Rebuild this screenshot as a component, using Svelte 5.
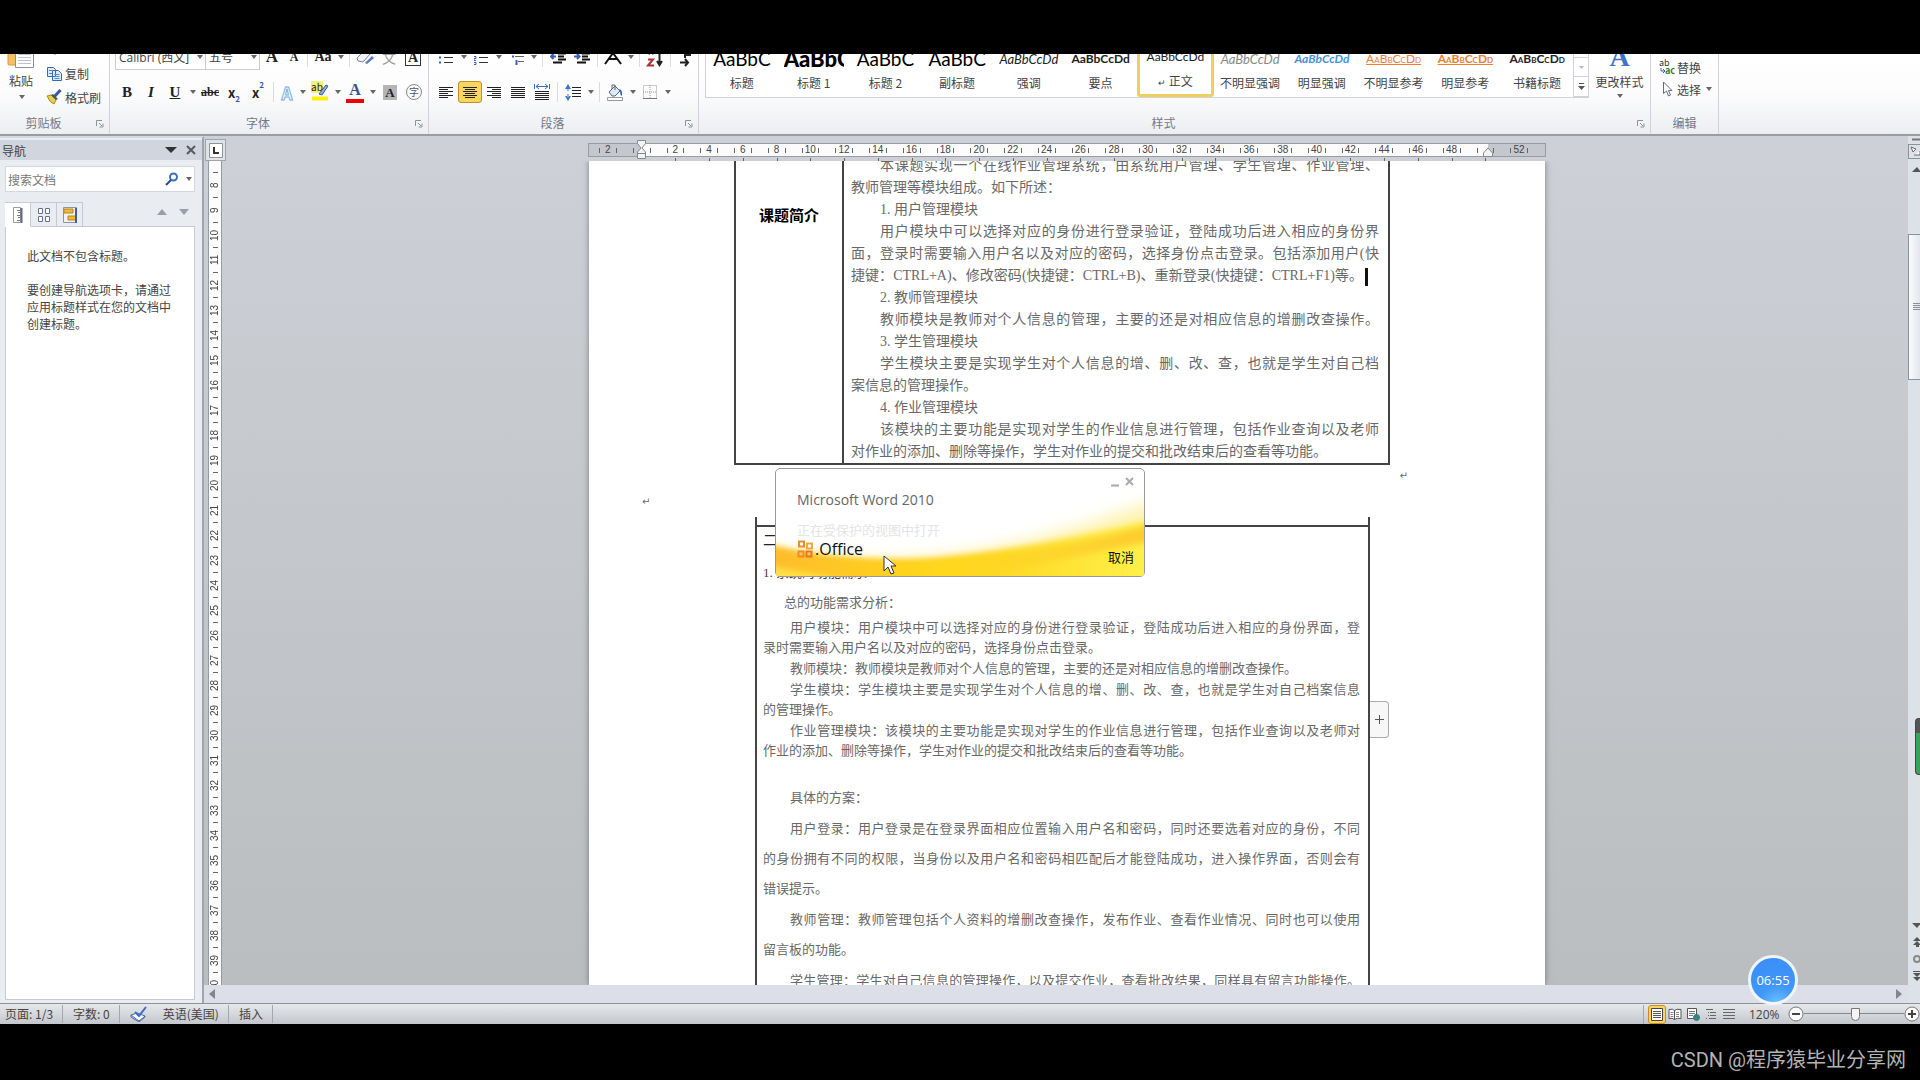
<script>
  const styles = [
    { sample: 'AaBbC', name: '标题', kind: 'big' },
    { sample: 'AaBbC', name: '标题 1', kind: 'huge' },
    { sample: 'AaBbC', name: '标题 2', kind: 'big' },
    { sample: 'AaBbC', name: '副标题', kind: 'big' },
    { sample: 'AaBbCcDd', name: '强调', kind: 'italic' },
    { sample: 'AaBbCcDd', name: '要点', kind: 'bold' },
    { sample: 'AaBbCcDd', name: '正文', kind: 'active' },
    { sample: 'AaBbCcDd', name: '不明显强调', kind: 'subtle' },
    { sample: 'AaBbCcDd', name: '明显强调', kind: 'intense' },
    { sample: 'AaBbCcDd', name: '不明显参考', kind: 'ref' },
    { sample: 'AaBbCcDd', name: '明显参考', kind: 'ref strong' },
    { sample: 'AaBbCcDd', name: '书籍标题', kind: 'book' }
  ];

  // horizontal ruler labels, '' where an indent marker sits
  const hMarks = ['2', ''];
  for (let i = 2; i <= 48; i += 2) hMarks.push(String(i));
  hMarks.push('', '52');

  const vMarks = [];
  for (let i = 8; i <= 40; i++) vMarks.push(i);

  // i: first line indent, f: line runs to the right margin
  const intro = [
    { t: '本课题实现一个在线作业管理系统，由系统用户管理、学生管理、作业管理、', i: true, f: true },
    { t: '教师管理等模块组成。如下所述：' },
    { t: '1. 用户管理模块', i: true },
    { t: '用户模块中可以选择对应的身份进行登录验证，登陆成功后进入相应的身份界', i: true, f: true },
    { t: '面，登录时需要输入用户名以及对应的密码，选择身份点击登录。包括添加用户(快', f: true },
    { t: '捷键：CTRL+A)、修改密码(快捷键：CTRL+B)、重新登录(快捷键：CTRL+F1)等。', f: true, caret: true },
    { t: '2. 教师管理模块', i: true },
    { t: '教师模块是教师对个人信息的管理，主要的还是对相应信息的增删改查操作。', i: true, f: true },
    { t: '3. 学生管理模块', i: true },
    { t: '学生模块主要是实现学生对个人信息的增、删、改、查，也就是学生对自己档', i: true, f: true },
    { t: '案信息的管理操作。' },
    { t: '4. 作业管理模块', i: true },
    { t: '该模块的主要功能是实现对学生的作业信息进行管理，包括作业查询以及老师', i: true, f: true },
    { t: '对作业的添加、删除等操作，学生对作业的提交和批改结束后的查看等功能。' }
  ];

  const needs = [
    ['用户模块：用户模块中可以选择对应的身份进行登录验证，登陆成功后进入相应的身份界面，登', '录时需要输入用户名以及对应的密码，选择身份点击登录。'],
    ['教师模块：教师模块是教师对个人信息的管理，主要的还是对相应信息的增删改查操作。'],
    ['学生模块：学生模块主要是实现学生对个人信息的增、删、改、查，也就是学生对自己档案信息', '的管理操作。'],
    ['作业管理模块：该模块的主要功能是实现对学生的作业信息进行管理，包括作业查询以及老师对', '作业的添加、删除等操作，学生对作业的提交和批改结束后的查看等功能。']
  ];

  const plans = [
    ['用户登录：用户登录是在登录界面相应位置输入用户名和密码，同时还要选着对应的身份，不同', '的身份拥有不同的权限，当身份以及用户名和密码相匹配后才能登陆成功，进入操作界面，否则会有', '错误提示。'],
    ['教师管理：教师管理包括个人资料的增删改查操作，发布作业、查看作业情况、同时也可以使用', '留言板的功能。'],
    ['学生管理：学生对自己信息的管理操作，以及提交作业，查看批改结果，同样具有留言功能操作。', '']
  ];

  let search = $state('');
  let zoom = $state(52);
</script>

{#snippet arrow()}
  <svg class="arrow" width="11" height="8" viewBox="0 0 11 8"><path d="M3 2h6L6 6z" fill="#666" /></svg>
{/snippet}

{#snippet launcher()}
  <svg class="launcher" width="8" height="8" viewBox="0 0 8 8"><path d="M.5 6V.5H6M3 3l3 3M7 3.5V7H3.5" fill="none" stroke="#8d929a" /></svg>
{/snippet}

{#snippet lines(a, b, c, d)}
  <svg width="14" height="13" viewBox="0 0 14 13">
    {#each [0, 1, 2, 3, 4, 5] as n}
      <path d={n % 2 ? `M${c} ${n * 2 + 1}.5H${d}` : `M${a} ${n * 2 + 1}.5H${b}`} stroke="#222" />
    {/each}
  </svg>
{/snippet}

{#snippet para(rows)}
  <div class="para">
    {#each rows as row, n}
      <div class="line" class:indent={n === 0} class:full={n < rows.length - 1}>{row}</div>
    {/each}
  </div>
{/snippet}

<div class="screen">
  <div class="band top"></div>

  <div class="word">
    <header class="ribbon">
      <section class="group clipboard">
        <div class="body">
          <button class="paste">
            <svg width="28" height="32" viewBox="0 0 28 32">
              <rect x="1" y="2" width="16" height="26" rx="1" fill="#f5bf62" stroke="#d99a3c" />
              <path d="M8.500 12.500h18v18h-18z" fill="#fff" stroke="#8a8f99" />
              <path d="M11 17.500h13M11 20.500h13M11 23.500h13M11 26.500h13" stroke="#b9c3d3" />
            </svg>
            <span>粘贴</span>
            {@render arrow()}
          </button>
          <div class="stack">
            <button aria-label="剪切"><svg width="16" height="16" viewBox="0 0 16 16"><path d="M4 1l4 8M11 1L7 9" stroke="#555" /><circle cx="5" cy="10" r="2" fill="none" stroke="#224" /><circle cx="9" cy="11" r="2" fill="none" stroke="#224" /></svg></button>
            <button><svg width="16" height="16" viewBox="0 0 16 16"><path d="M1.500 2.500h6l2 2v7h-8zM6.500 5.500h6l3 3v7h-9z" fill="#dbe9fb" stroke="#3b66b5" /><path d="M3 5.500h3M3 8.500h3M8.500 9.500h5M8.500 11.500h5M8.500 13.500h5" stroke="#5b87cf" /></svg>复制</button>
            <button><svg width="16" height="16" viewBox="0 0 16 16"><path d="M14.500 1L8 8" stroke="#3b56a0" stroke-width="3" /><path d="M1 7l4-1 5 5-2 4q-4-1-7-8z" fill="#e9cf4e" stroke="#a58a23" /><path d="M5 6l5 5 2-1-5-5z" fill="#4f5560" /></svg>格式刷</button>
          </div>
        </div>
        <footer>剪贴板{@render launcher()}</footer>
      </section>

      <section class="group font">
        <div class="body rows">
          <div class="row first">
            <label class="combo face"><select aria-label="字体"><option>Calibri (西文]</option></select>{@render arrow()}</label>
            <label class="combo size"><select aria-label="字号"><option>五号</option></select>{@render arrow()}</label>
            <button class="serif up">A</button>
            <button class="serif down">A</button>
            <i class="sep"></i>
            <button class="serif case">Aa</button>{@render arrow()}
            <i class="sep"></i>
            <button aria-label="清除格式"><svg width="20" height="18" viewBox="0 0 20 18"><path d="M2 10l7-7 6 3-7 8-5-1z" fill="#f2f2f6" stroke="#7b84a5" /><path d="M10 15l7-7 2 2-7 6z" fill="#5a77c0" /></svg></button>
            <button class="wen">文</button>
            <button><span class="boxed">A</span></button>
          </div>
          <div class="row">
            <button class="serif"><b>B</b></button>
            <button class="serif"><em>I</em></button>
            <button class="serif"><u>U</u></button>{@render arrow()}
            <button class="serif small"><s>abc</s></button>
            <button class="script">x<sub>2</sub></button>
            <button class="script">x<sup>2</sup></button>
            <i class="sep"></i>
            <button class="glow">A</button>{@render arrow()}
            <button class="mark"><span>ab</span><svg width="20" height="18" viewBox="0 0 20 18"><path d="M9 11l7-9 2 1-6 9z" fill="#8fb1e6" stroke="#35588f" /><path d="M2 15.500h16" stroke="#ffee00" stroke-width="4" /></svg></button>{@render arrow()}
            <button class="ink">A</button>{@render arrow()}
            <button><span class="shade">A</span></button>
            <button><span class="ring">字</span></button>
          </div>
        </div>
        <footer>字体{@render launcher()}</footer>
      </section>

      <section class="group paragraph">
        <div class="body rows">
          <div class="row first">
            <button aria-label="项目符号"><svg width="14" height="16" viewBox="0 0 14 16"><path d="M5 3.500h9M5 8.500h9M5 13.500h9" stroke="#333" /><path d="M0 3.500h2M0 8.500h2M0 13.500h2" stroke="#3b5fb8" stroke-width="2" /></svg></button>{@render arrow()}
            <button aria-label="编号"><svg width="14" height="16" viewBox="0 0 14 16"><path d="M5 3.500h9M5 8.500h9M5 13.500h9" stroke="#333" /><path d="M1.500 1v4M0 7.500h2v2H0v2h2M0 15.500h2v-2H0" fill="none" stroke="#3b5fb8" /></svg></button>{@render arrow()}
            <button aria-label="多级列表"><svg width="18" height="18" viewBox="0 0 18 18"><path d="M4 3.500h10M8 8.500h9M11 13.500h6" stroke="#666" /><path d="M1.500 1v4M5 8.500h2M9.500 12v5" stroke="#3b5fb8" stroke-width="2" /></svg></button>{@render arrow()}
            <i class="sep"></i>
            <button aria-label="减少缩进量"><svg width="16" height="16" viewBox="0 0 16 16"><path d="M0 1.500h16M8 4.500h8M8 7.500h6M8 10.500h8M3 13.500h9" stroke="#111" stroke-width="2" /><path d="M6 7.500H1M3.500 5L1 7.500 3.500 10" fill="none" stroke="#3b5fb8" stroke-width="2" /></svg></button>
            <button aria-label="增加缩进量"><svg width="16" height="16" viewBox="0 0 16 16"><path d="M0 1.500h16M8 4.500h8M8 7.500h6M8 10.500h8M3 13.500h9" stroke="#111" stroke-width="2" /><path d="M0 7.500h5M3 5l2.500 2.500L3 10" fill="none" stroke="#3b5fb8" stroke-width="2" /></svg></button>
            <i class="sep"></i>
            <button aria-label="中文版式"><svg width="18" height="20" viewBox="0 0 18 20"><path d="M1 17l8-11 8 11M5 12h8" fill="none" stroke="#111" stroke-width="2" /></svg></button>{@render arrow()}
            <i class="sep"></i>
            <button aria-label="排序"><svg width="18" height="22" viewBox="0 0 18 22"><path d="M3 9l2-6 2 6" fill="none" stroke="#3b5fb8" /><path d="M2 13.500h5l-5 6h6" fill="none" stroke="#a33" stroke-width="2" /><path d="M13.500 2v16M11 15l2.500 4 2.500-4" fill="none" stroke="#222" stroke-width="2" /></svg></button>
            <i class="sep"></i>
            <button aria-label="编辑标记"><svg width="14" height="20" viewBox="0 0 14 20"><path d="M6 3v8M6 4h5v4H7" fill="none" stroke="#222" stroke-width="2" /><path d="M1 15.500h8M6 12l3 3.500L6 19" fill="none" stroke="#222" stroke-width="2" /></svg></button>
          </div>
          <div class="row">
            <button aria-label="左对齐">{@render lines(0, 14, 0, 9)}</button>
            <button class="on" aria-label="居中">{@render lines(0, 14, 2, 12)}</button>
            <button aria-label="右对齐">{@render lines(0, 14, 5, 14)}</button>
            <button aria-label="两端对齐">{@render lines(0, 14, 0, 14)}</button>
            <button aria-label="分散对齐"><svg width="16" height="18" viewBox="0 0 16 18"><path d="M.5 1v5M15.500 1v5M2 3.500h12M5 1L2 3.500 5 6M11 1l3 2.500L11 6" fill="none" stroke="#3b66c5" /><path d="M1 8.500h14M1 10.500h14M1 12.500h14M1 14.500h14M1 16.500h14" stroke="#222" /></svg></button>
            <i class="sep"></i>
            <button aria-label="行距"><svg width="16" height="17" viewBox="0 0 16 17"><path d="M3 0l3 5H0zM3 17l3-5H0zM2.500 4h1v3h-1zM2.500 10h1v3h-1z" fill="#3b73c9" /><path d="M7 3.500h9M7 6.500h9M7 9.500h9M7 12.500h9" stroke="#222" /></svg></button>{@render arrow()}
            <i class="sep"></i>
            <button aria-label="底纹"><svg width="18" height="17" viewBox="0 0 18 17"><path d="M3 8l6-6 5 5-5 5H6z" fill="#dfe8f5" stroke="#55647c" /><path d="M6 5V1h3v5" fill="none" stroke="#55647c" /><path d="M13 5q4 1 3 7-2-1-2-4z" fill="#3568c0" /><path d="M1.500 13.500h15v3h-15z" fill="#fff" stroke="#999" /></svg></button>{@render arrow()}
            <button aria-label="框线"><svg width="14" height="14" viewBox="0 0 14 14"><path d="M.5.5h13v13H.5zM7 0v14M0 7h14" fill="none" stroke="#999" stroke-dasharray="1 1" /><path d="M0 13.500h14" stroke="#777" /></svg></button>{@render arrow()}
          </div>
        </div>
        <footer>段落{@render launcher()}</footer>
      </section>

      <section class="group styles">
        <div class="body">
          <div class="gallery">
            {#each styles as s}
              <button class="style {s.kind}">
                <span class="sample">{s.sample}</span>
                <span class="name">{#if s.kind === 'active'}<small>↵</small>{/if} {s.name}</span>
              </button>
            {/each}
            <div class="pager">
              <button aria-label="上一行"></button>
              <button aria-label="下一行"><svg width="7" height="5" viewBox="0 0 7 5"><path d="M1 1h5L3.500 4z" fill="#b5b9c0" /></svg></button>
              <button aria-label="其他"><svg width="7" height="8" viewBox="0 0 7 8"><path d="M1 .5h5" stroke="#555" /><path d="M0 3h7L3.500 7z" fill="#555" /></svg></button>
            </div>
          </div>
          <button class="change">
            <span class="bigA">A</span>
            <span>更改样式</span>
            {@render arrow()}
          </button>
        </div>
        <footer>样式{@render launcher()}</footer>
      </section>

      <section class="group edit">
        <div class="body">
          <div class="stack">
            <button><svg width="16" height="16" viewBox="0 0 16 16"><text x="0" y="7" font-size="9" fill="#333">ab</text><path d="M2 9v3h3M4 10l2 2-2 2" fill="none" stroke="#3b5fb8" /><text x="6" y="15" font-size="9" font-weight="bold" fill="#2e7d32">ac</text></svg>替换</button>
            <button><svg width="16" height="16" viewBox="0 0 16 16"><path d="M4.500 1v11.500l3-2.500 2 5 2-1-2-4.500h3.500z" fill="#fff" stroke="#5a6d92" /></svg>选择{@render arrow()}</button>
          </div>
        </div>
        <footer>编辑</footer>
      </section>
    </header>

    <main class="work">
      <aside class="nav">
        <h2>导航
          <span><svg width="12" height="8" viewBox="0 0 12 8"><path d="M0 1h12L6 7z" fill="#333" /></svg><svg width="10" height="10" viewBox="0 0 10 10"><path d="M1 1l8 8M9 1L1 9" stroke="#555b66" stroke-width="2" /></svg></span>
        </h2>
        <label class="search">
          <input type="text" placeholder="搜索文档" bind:value={search} />
          <svg width="14" height="14" viewBox="0 0 14 14"><circle cx="8.500" cy="5" r="3.500" fill="none" stroke="#3b70b5" stroke-width="2" /><path d="M6 8l-5 5" stroke="#27508a" stroke-width="2" /></svg>
          {@render arrow()}
        </label>
        <div class="tabs">
          <button class="tab current" aria-label="标题"><svg width="10" height="16" viewBox="0 0 10 16"><path d="M.5.5h7v15h-7z" fill="#fff" stroke="#99a" /><path d="M8.500 1v15" stroke="#667" stroke-width="2" /><path d="M4 3.500h3M5 5.500h2M4 8.500h3M5 10.500h2M4 13.500h3" stroke="#778" /></svg></button>
          <button class="tab" aria-label="页面"><svg width="14" height="16" viewBox="0 0 14 16"><path d="M1.500 1.500h4v5h-4zM8.500 1.500h4v5h-4zM1.500 9.500h4v5h-4zM8.500 9.500h4v5h-4z" fill="#fff" stroke="#66708c" /></svg></button>
          <button class="tab" aria-label="结果"><svg width="14" height="16" viewBox="0 0 14 16"><path d="M.5.5h13v15H.5z" fill="#eef2fa" stroke="#8a93ab" /><path d="M1 2h9v4H1zM5 9h8v4H5z" fill="#efb93a" stroke="#b98617" /><path d="M13 1v15" stroke="#445c99" stroke-width="2" /></svg></button>
          <span class="steps"><svg width="10" height="7" viewBox="0 0 10 7"><path d="M5 0l5 6H0z" fill="#9a9fa6" /></svg><svg width="10" height="7" viewBox="0 0 10 7"><path d="M0 0h10L5 6z" fill="#9a9fa6" /></svg></span>
        </div>
        <div class="panel">
          <p>此文档不包含标题。</p>
          <p>要创建导航选项卡，请通过应用标题样式在您的文档中创建标题。</p>
        </div>
      </aside>

      <button class="corner" aria-label="制表符"><svg width="14" height="15" viewBox="0 0 14 15"><path d="M.5.5h13v14H.5z" fill="#fff" stroke="#8d929a" /><path d="M5 4v6h5" fill="none" stroke="#333" stroke-width="2" /></svg></button>

      <div class="hrule">
        <div class="scale">
          {#each hMarks as m, n}
            <div class="cell" class:mute={n < 2 || n > 26}><i></i><span>{m}</span><i></i></div>
          {/each}
          <svg class="marker start" width="12" height="20" viewBox="0 0 12 20"><path d="M1.500.5h8v3L6 8l3.500 4v6.500h-8V12L5 8 1.500 3.500zM1.500 13.500h8" fill="#f2f3f5" stroke="#888" /></svg>
          <svg class="marker end" width="12" height="10" viewBox="0 0 12 10"><path d="M1.500 9.500V6L6 1l4.500 5v3.500z" fill="#f2f3f5" stroke="#888" /></svg>
        </div>
      </div>

      <div class="vrule">
        <div class="strip">
          {#each vMarks as m}
            <div class="vcell"><i></i><span>{m}</span></div>
          {/each}
        </div>
      </div>

      <div class="canvas">
        <article class="page">
          <table class="topic">
            <tbody>
              <tr>
                <th scope="row">课题简介</th>
                <td>
                  {#each intro as l}
                    <div class="line" class:indent={l.i} class:full={l.f}>{l.t}{#if l.caret}<span class="caret"></span>{/if}</div>
                  {/each}
                </td>
              </tr>
            </tbody>
          </table>
          <div class="return right">↵</div>
          <div class="return left">↵</div>
          <div class="second">
            <div class="sheet">
              <div class="content">
                <h3>二、</h3>
                <h4>1. 系统的功能需求</h4>
                <div class="line lead">总的功能需求分析：</div>
                <div class="needs">
                  {#each needs as p}{@render para(p)}{/each}
                </div>
                <div class="plans">
                  <div class="para"><div class="line indent">具体的方案：</div></div>
                  {#each plans as p}{@render para(p)}{/each}
                </div>
              </div>
            </div>
            <button class="add" aria-label="添加"><svg width="9" height="9" viewBox="0 0 9 9"><path d="M4.500 0v9M0 4.500h9" stroke="#555" /></svg></button>
          </div>
        </article>
      </div>

      <div class="vscroll">
        <svg width="12" height="26" viewBox="0 0 12 26"><path d="M4 3.500h8" stroke="#777" stroke-width="2" /><path d="M.5 8.500H12M.5 8v14M0 22.500h12" fill="none" stroke="#8d929a" /><path d="M3 11l2 5 3-3zM6 19h6v-4" fill="#fff" stroke="#666" /></svg>
        <svg width="12" height="20" viewBox="0 0 12 20"><path d="M4 10l5-5 4 5z" fill="#555" /></svg>
        <div class="thumb"><svg width="12" height="10" viewBox="0 0 12 10"><path d="M4 1.500h8M4 3.500h8M4 5.500h8M4 7.500h8" stroke="#8a8f99" /></svg></div>
        <div class="jump">
          <svg width="12" height="14" viewBox="0 0 12 14"><path d="M4 5l5 5 4-5z" fill="#555" /></svg>
          <svg width="12" height="14" viewBox="0 0 12 14"><path d="M5 6l4-4 4 4zM5 10l4-4 4 4zM8 9h3v3H8z" fill="#555" /></svg>
          <svg width="12" height="14" viewBox="0 0 12 14"><circle cx="9" cy="7" r="3" fill="none" stroke="#888" stroke-width="2" /></svg>
          <svg width="12" height="14" viewBox="0 0 12 14"><path d="M5 4l4 4 4-4zM5 8l4 4 4-4zM5 2h8v1H5z" fill="#555" /></svg>
        </div>
      </div>

      <div class="hscroll">
        <svg width="6" height="10" viewBox="0 0 6 10"><path d="M6 0v10L0 5z" fill="#80858f" /></svg>
        <svg width="6" height="10" viewBox="0 0 6 10"><path d="M0 0v10l6-5z" fill="#80858f" /></svg>
      </div>
    </main>

    <footer class="status">
      <span class="item">页面: 1/3</span>
      <span class="item">字数: 0</span>
      <span class="item lang"><svg width="18" height="16" viewBox="0 0 18 16"><path d="M1 9l6-2 8 3-6 5z" fill="#fff" stroke="#4d66a8" /><path d="M1 9v2l8 5 6-5v-1" fill="none" stroke="#4d66a8" /><path d="M5 6l4 4 7-9" fill="none" stroke="#3f69c4" stroke-width="2" /></svg>英语(美国)</span>
      <span class="item">插入</span>
      <div class="views">
        <button class="on" aria-label="页面视图"><svg width="14" height="13" viewBox="0 0 14 13"><path d="M1.500.5h11v12h-11z" fill="#fff" stroke="#444" /><path d="M3 3.500h8M3 5.500h8M3 7.500h8M3 9.500h8" stroke="#555" /></svg></button>
        <button aria-label="阅读版式"><svg width="14" height="13" viewBox="0 0 14 13"><path d="M1 1.500q4-1 5.500 1 2-2 6.500-1v9q-4-1-6.500 1-2-2-5.500-1zM6.500 2v10" fill="#fff" stroke="#555" /><path d="M2.500 4.500h3M2.500 6.500h3M2.500 8.500h3M8 4.500h3M8 6.500h3M8 8.500h3" stroke="#888" /></svg></button>
        <button aria-label="Web 版式"><svg width="14" height="13" viewBox="0 0 14 13"><path d="M1.500.5h9v10h-9z" fill="#fff" stroke="#555" /><path d="M3 3.500h6M3 5.500h6M3 7.500h4" stroke="#777" /><circle cx="10.500" cy="9.500" r="3" fill="#2f8a78" stroke="#3f6f9a" /></svg></button>
        <button aria-label="大纲"><svg width="14" height="13" viewBox="0 0 14 13"><path d="M2 1.500h7M4 4.500h1M6 4.500h6M4 7.500h1M6 7.500h6M2 10.500h1M5 10.500h7" stroke="#666" /></svg></button>
        <button aria-label="草稿"><svg width="14" height="13" viewBox="0 0 14 13"><path d="M1 1.500h12M1 4.500h12M1 7.500h12M1 10.500h12" stroke="#666" /></svg></button>
      </div>
      <span class="percent">120%</span>
      <button class="round" aria-label="缩小"><svg width="16" height="16" viewBox="0 0 16 16"><circle cx="8" cy="8" r="7" fill="#fafafa" stroke="#777" /><path d="M4 8h8" stroke="#444" stroke-width="2" /></svg></button>
      <input class="zoom" type="range" min="0" max="100" bind:value={zoom} aria-label="显示比例" />
      <button class="round" aria-label="放大"><svg width="16" height="16" viewBox="0 0 16 16"><circle cx="8" cy="8" r="7" fill="#fafafa" stroke="#777" /><path d="M4 8h8M8 4v8" stroke="#444" stroke-width="2" /></svg></button>
    </footer>
  </div>

  <div class="band credit">CSDN @程序猿毕业分享网</div>

  <div class="splash" role="dialog" aria-label="Microsoft Word 2010">
    <svg class="wave" viewBox="0 0 370 108" preserveAspectRatio="none">
      <defs>
        <linearGradient id="base" x1="0" x2="1"><stop offset="0" stop-color="#fdc433" /><stop offset=".3" stop-color="#ffca1c" /><stop offset=".6" stop-color="#fdd926" /><stop offset="1" stop-color="#fff34c" /></linearGradient>
        <linearGradient id="rim" x1="0" x2="1"><stop offset="0" stop-color="#fdb92c" /><stop offset=".45" stop-color="#ffd81c" /><stop offset=".8" stop-color="#fdd42e" /><stop offset="1" stop-color="#fcca2c" /></linearGradient>
        <filter id="soft" x="-10%" y="-30%" width="120%" height="160%"><feGaussianBlur stdDeviation="3" /></filter>
        <filter id="haze" x="-10%" y="-30%" width="120%" height="160%"><feGaussianBlur stdDeviation="8" /></filter>
      </defs>
      <path d="M-20 76Q60 98 160 88T390 28V130H-20z" fill="#fff2b0" filter="url(#haze)" />
      <path d="M-20 74Q70 98 160 90T390 48V130H-20z" fill="url(#base)" filter="url(#soft)" />
      <path d="M-20 76Q70 98 170 92T390 52V70Q270 96 180 110T-20 92z" fill="url(#rim)" filter="url(#soft)" />
      <path d="M-10 98Q40 106 90 116H-10z" fill="#ffe04a" filter="url(#soft)" />
    </svg>
    <div class="tools">
      <button aria-label="最小化"><svg width="8" height="10" viewBox="0 0 8 10"><path d="M0 8.500h8" stroke="#aaa" stroke-width="2" /></svg></button>
      <button aria-label="关闭"><svg width="9" height="9" viewBox="0 0 9 9"><path d="M1 1l7 7M8 1L1 8" stroke="#aaa" stroke-width="2" /></svg></button>
    </div>
    <h1>Microsoft Word 2010</h1>
    <p>正在受保护的视图中打开</p>
    <div class="brand">
      <div class="logo"><svg width="18" height="18" viewBox="0 0 18 18"><path d="M2 1.500h5v5H2zM1.500 11.500h5v5h-5z" fill="none" stroke="#f08a2c" stroke-width="2" /><path d="M10 3.500h5v5h-5z" fill="none" stroke="#f3a93a" stroke-width="2" /><path d="M9.500 11.500h5v5h-5z" fill="none" stroke="#e9742a" stroke-width="2" /></svg><span>.Office</span></div>
      <button class="cancel">取消</button>
    </div>
    <svg class="pointer" width="14" height="20" viewBox="0 0 14 20"><path d="M1 1v15l4-4 3 7 3-1-3-7h5z" fill="#fff" stroke="#333" /></svg>
  </div>

  <div class="clock">06:55</div>
  <div class="meter"></div>
</div>

<style>
  :global(body) {
    background: #000;
  }

  .screen {
    position: relative;
    display: flex;
    flex-direction: column;
    height: 100vh;
    overflow: hidden;
    background: #000;
    color: #444;
    font-family: "Noto Sans CJK SC", sans-serif;
    font-size: 12px;
  }

  button, input, select {
    font: inherit;
    color: inherit;
    border: 0;
    padding: 0;
    margin: 0;
    background: none;
    border-radius: 0;
  }

  .band {
    height: 54px;
    flex: none;
  }

  .band.credit {
    height: 56px;
    padding-right: 14px;
    box-sizing: border-box;
    text-align: right;
    color: #b4b4b4;
    font-family: Roboto, "Noto Sans CJK SC", sans-serif;
    font-size: 20px;
    line-height: 72px;
  }

  .word {
    flex: 1;
    min-height: 0;
    display: flex;
    flex-direction: column;
  }

  /* ribbon */
  .ribbon {
    height: 80px;
    flex: none;
    display: flex;
    align-items: flex-end;
    overflow: hidden;
    background: linear-gradient(#fff, #fcfcfd 50%, #eceef1);
    border-bottom: 2px solid #989ca4;
  }

  .group {
    display: flex;
    flex-direction: column;
    height: 97px;
    box-sizing: border-box;
    border-right: 1px solid #cfd2d8;
  }

  .group .body {
    height: 75px;
    display: flex;
  }

  .group footer {
    position: relative;
    height: 22px;
    padding-right: 22px;
    line-height: 22px;
    text-align: center;
    color: #747985;
  }

  .edit footer {
    padding-right: 0 !important;
  }

  .launcher {
    position: absolute;
    right: 5px;
    top: 8px;
  }

  .arrow {
    flex: none;
  }

  .clipboard { width: 110px; }
  .font { width: 319px; }
  .paragraph { width: 270px; }
  .styles { width: 952px; }
  .edit { width: 68px; }

  .paste {
    width: 42px;
    display: flex;
    flex-direction: column;
    align-items: center;
  }

  .paste span {
    line-height: 24px;
  }

  .stack button {
    height: 24px;
    display: flex;
    align-items: center;
    gap: 3px;
    white-space: nowrap;
  }

  .stack {
    padding-left: 4px;
  }

  .rows {
    flex-direction: column;
    gap: 10px;
    padding: 7px 0 0 5px;
    height: 68px !important;
  }

  .row {
    display: flex;
    align-items: center;
    height: 24px;
    color: #222;
  }

  .row.first {
    height: 26px;
  }

  .row button {
    width: 24px;
    height: 22px;
    display: flex;
    align-items: center;
    justify-content: center;
    box-sizing: border-box;
  }

  .row .on, .views .on {
    border: 1px solid #c98b2a;
    border-radius: 3px;
    background: #fbd65f;
  }

  .sep {
    width: 1px;
    height: 20px;
    margin: 0 3px;
    background: #d9dbe0;
  }

  .combo {
    display: flex;
    align-items: center;
    height: 26px;
    box-sizing: border-box;
    border: 1px solid #c9ccd2;
    background: #fff;
  }

  .combo select {
    flex: 1;
    min-width: 0;
    height: 24px;
    padding-left: 3px;
    appearance: none;
    color: #444;
    font-family: "Open Sans", "Noto Sans CJK SC", sans-serif;
  }

  .face { width: 91px; }
  .size { width: 54px; border-left: 0; }

  .serif {
    font-family: "Liberation Serif", serif;
    font-size: 15px;
    font-weight: bold;
  }

  .row .up { font-size: 17px; }
  .row .down { font-size: 12px; width: 20px; }
  .row .case { font-size: 14px; }
  .row .small { font-size: 12px; }
  .row .wen { color: #999; font-size: 14px; }

  .script {
    font-size: 13px;
    font-weight: bold;
  }

  .script sub, .script sup {
    font-size: 8px;
    color: #3355aa;
    line-height: 8px;
  }

  .script sub { align-self: flex-end; }
  .script sup { align-self: flex-start; }

  .boxed {
    border: 1px solid #333;
    width: 14px;
    line-height: 15px;
    font-family: "Liberation Serif", serif;
    font-weight: bold;
    font-size: 14px;
  }

  .row .glow {
    width: 20px;
    font-size: 17px;
    color: #fff;
    -webkit-text-stroke: 1px #74aee0;
    font-weight: bold;
  }

  .mark {
    position: relative;
  }

  .mark span {
    position: absolute;
    left: 3px;
    top: 0;
    line-height: 12px;
    font-size: 10px;
    background: #f4f07a;
  }

  .mark svg {
    position: relative;
  }

  .row .ink {
    width: 18px;
    margin: 0 3px;
    color: #33508f;
    font: bold 16px/18px "Liberation Serif", serif;
    border-bottom: 4px solid #f00000;
  }

  .shade {
    width: 14px;
    line-height: 14px;
    background: #b5b5b5;
    font: bold 13px/15px "Liberation Serif", serif;
  }

  .ring {
    width: 14px;
    height: 14px;
    border: 1px solid #888;
    border-radius: 50%;
    font-size: 10px;
    line-height: 13px;
    color: #555;
  }

  .styles .body {
    padding-left: 6px;
  }

  .gallery {
    display: flex;
    width: 884px;
    height: 61px;
    box-sizing: border-box;
    border: 1px solid #cfd2d8;
    background: #fff;
  }

  .style {
    flex: 1;
    min-width: 0;
    height: 59px;
    box-sizing: border-box;
    display: flex;
    flex-direction: column;
    justify-content: flex-end;
    align-items: center;
    padding-bottom: 3px;
  }

  .sample {
    width: 60px;
    height: 24px;
    line-height: 22px;
    overflow: hidden;
    font-family: Lato, sans-serif;
    font-size: 12px;
    text-align: center;
    color: #222;
    white-space: nowrap;
  }

  .name {
    line-height: 22px;
    white-space: nowrap;
  }

  .name small {
    font-size: 9px;
  }

  .big .sample { font-size: 19px; color: #000; }
  .huge .sample { font-size: 22px; font-weight: 900; color: #000; text-align: left; }
  .italic .sample { font-style: italic; font-size: 13px; }
  .bold .sample { font-weight: bold; }
  .subtle .sample { font-style: italic; font-size: 13px; color: #888; }
  .intense .sample { font-style: italic; font-weight: bold; color: #4a90d6; }
  .ref .sample, .book .sample { font-variant: small-caps; }
  .ref .sample { color: #ed7d31; text-decoration: underline; }
  .strong .sample, .book .sample { font-weight: bold; }

  .style.active {
    border: 3px solid #f2cf5b;
    border-radius: 3px;
    padding: 0;
  }

  .pager {
    width: 14px;
    display: flex;
    flex-direction: column;
    border-left: 1px solid #cfd2d8;
  }

  .pager button {
    flex: 1;
    border-bottom: 1px solid #cfd2d8;
    display: flex;
    align-items: center;
    justify-content: center;
  }

  .change {
    flex: 1;
    display: flex;
    flex-direction: column;
    align-items: center;
    line-height: 20px;
  }

  .bigA {
    height: 35px;
    font: bold 28px/40px "Liberation Serif", serif;
    color: #3f74c8;
  }

  .edit .stack {
    padding: 19px 0 0 8px;
  }

  .edit .stack button {
    height: 22px;
    gap: 2px;
  }

  /* work area */
  .work {
    flex: 1;
    min-height: 0;
    display: grid;
    grid-template-columns: 204px 22px 1fr 12px;
    grid-template-rows: 25px 1fr 18px;
    background: linear-gradient(#cdd0d6, #b9bdbf);
  }

  .nav {
    grid-row: 1 / 4;
    display: flex;
    flex-direction: column;
    padding: 2px 7px 3px 5px;
    background: #e9edf2;
    border-right: 2px solid #a0a4ac;
    border-top: 2px solid #d5d9e0;
    box-sizing: border-box;
  }

  .nav h2 {
    display: flex;
    justify-content: space-between;
    align-items: center;
    margin: 0 -7px 6px -5px;
    padding: 0 6px 0 2px;
    height: 20px;
    background: #d0d5de;
    font-size: 12px;
    font-weight: normal;
  }

  .nav h2 span {
    display: flex;
    align-items: center;
    gap: 9px;
  }

  .search {
    display: flex;
    align-items: center;
    height: 26px;
    box-sizing: border-box;
    border: 1px solid #d3d7de;
    background: #fff;
    gap: 4px;
  }

  .search input {
    flex: 1;
    min-width: 0;
    padding-left: 2px;
    outline: 0;
  }

  .search input::placeholder {
    color: #777;
  }

  .tabs {
    display: flex;
    height: 25px;
    margin-top: 10px;
  }

  .tab {
    width: 26px;
    display: flex;
    align-items: center;
    justify-content: center;
    border: 1px solid #c6cad2;
    border-left: 0;
    box-sizing: border-box;
  }

  .tab.current {
    background: #fff;
    border-bottom-color: #fff;
  }

  .steps {
    flex: 1;
    display: flex;
    align-items: center;
    justify-content: flex-end;
    gap: 12px;
    padding-right: 6px;
    border-bottom: 1px solid #c6cad2;
    padding-bottom: 4px;
  }

  .panel {
    flex: 1;
    background: #fff;
    border: 1px solid #c6cad2;
    border-top: 0;
    padding: 20px 16px 0 21px;
  }

  .panel p {
    margin: 0 0 17px;
    line-height: 17px;
  }

  .corner {
    display: flex;
    align-items: center;
    justify-content: center;
    border: 1px solid #9fa3ab;
    margin: 3px 0 0 1px;
    background: #dfe2e7;
  }

  .hrule {
    grid-column: 3;
    display: flex;
    justify-content: center;
    align-items: flex-start;
    padding-top: 7px;
  }

  .scale {
    position: relative;
    width: 958px;
    height: 14px;
    display: flex;
    box-sizing: border-box;
    padding: 0 9px 0 2px;
    border: 1px solid #979ba3;
    background: linear-gradient(to right, #c4c8ce 53px, #fcfcfc 53px, #fcfcfc 899px, #c4c8ce 899px);
    font: 10px/12px "Liberation Sans", sans-serif;
  }

  .cell {
    position: relative;
    flex: 1;
    min-width: 0;
    display: flex;
    align-items: center;
    justify-content: space-between;
    padding: 0 8px;
  }

  .cell i {
    width: 1px;
    height: 5px;
    background: #666;
  }

  .cell::after {
    content: '';
    position: absolute;
    left: 50%;
    top: 14px;
    height: 3px;
    border-left: 1px solid #666;
  }

  .cell.mute::after {
    display: none;
  }

  .marker {
    position: absolute;
  }

  .start { left: 47px; top: -4px; }
  .end { left: 893px; top: 3px; }

  .vrule {
    grid-column: 2;
    grid-row: 2;
    overflow: hidden;
    min-height: 0;
  }

  .strip {
    width: 12px;
    margin-left: 4px;
    padding-top: 11px;
    background: #fcfcfc;
    border: solid #979ba3;
    border-width: 0 1px;
    font: 10px/12px "Liberation Sans", sans-serif;
  }

  .vcell {
    height: 25px;
    display: flex;
    flex-direction: column;
    align-items: center;
  }

  .vcell i {
    width: 5px;
    height: 1px;
    background: #666;
  }

  .vcell span {
    flex: 1;
    writing-mode: vertical-rl;
    transform: rotate(180deg);
    text-align: center;
  }

  .canvas {
    grid-column: 3;
    grid-row: 2;
    min-height: 0;
    overflow: hidden;
  }

  .page {
    width: 956px;
    height: 100%;
    margin: 0 auto;
    background: #fff;
    box-shadow: 0 0 6px rgba(70, 75, 85, .6);
    color: #686868;
    font-family: "Liberation Serif", "Noto Sans CJK SC", serif;
    font-size: 14px;
    display: flow-root;
  }

  .topic {
    width: 656px;
    margin: -8px 0 0 145px;
    border-collapse: collapse;
  }

  .topic th {
    width: 108px;
    padding: 49px 0 0;
    box-sizing: border-box;
    vertical-align: top;
    border: 2px solid #444;
    color: #000;
    font-size: 15px;
    line-height: 24px;
  }

  .topic td {
    border: 2px solid #444;
    padding: 0 9px 0 7px;
    line-height: 22px;
  }

  .line {
    white-space: nowrap;
  }

  .line.full {
    white-space: normal;
    text-align-last: justify;
  }

  .indent {
    padding-left: 29px;
  }

  .caret {
    display: inline-block;
    width: 3px;
    height: 18px;
    margin: 0 11px 0 2px;
    vertical-align: middle;
    background: #111;
  }

  .return {
    font: 10px/22px "DejaVu Sans", sans-serif;
  }

  .return.right {
    text-align: right;
    padding-right: 137px;
  }

  .return.left {
    padding: 4px 0 4px 53px;
  }

  .second {
    display: flex;
    margin-left: 166px;
  }

  .sheet {
    width: 615px;
    box-sizing: border-box;
    border: solid #444;
    border-width: 0 2px;
    padding-top: 8px;
    font-size: 13px;
  }

  .content {
    border-top: 2px solid #444;
    padding: 0 8px 0 6px;
  }

  .content h3, .content h4 {
    margin: 0;
    font-size: 14px;
    line-height: 28px;
    font-weight: normal;
    color: #222;
  }

  .content h4 {
    line-height: 36px;
    font-size: 13px;
    color: #5a3434;
  }

  .lead {
    line-height: 24px;
    padding-left: 21px;
  }

  .content .indent {
    padding-left: 27px;
  }

  .needs {
    padding-top: 3px;
    line-height: 20px;
  }

  .plans {
    padding-top: 21px;
    line-height: 30px;
  }

  .para {
    margin-bottom: 1px;
  }

  .add {
    width: 19px;
    height: 37px;
    margin-top: 184px;
    display: flex;
    align-items: center;
    justify-content: center;
    border: 1px solid #aaa;
    border-left: 0;
    border-radius: 0 4px 4px 0;
    background: #f7f7f7;
  }

  .vscroll {
    grid-column: 4;
    grid-row: 1 / 4;
    display: flex;
    flex-direction: column;
    background: #dde1e8;
    overflow: hidden;
  }

  .vscroll svg {
    flex: none;
    display: block;
  }

  .thumb {
    height: 146px;
    margin-top: 52px;
    box-sizing: border-box;
    display: flex;
    align-items: center;
    border: 1px solid #8d929a;
    border-right: 0;
    background: linear-gradient(to right, #fafbfd, #e3e6ec);
  }

  .jump {
    margin-top: auto;
    padding-bottom: 20px;
    display: flex;
    flex-direction: column;
    gap: 3px;
  }

  .hscroll {
    grid-column: 2 / 4;
    grid-row: 3;
    display: flex;
    align-items: center;
    justify-content: space-between;
    padding: 0 6px 0 5px;
    background: #dcdfe8;
  }

  /* status bar */
  .status {
    height: 21px;
    flex: none;
    box-sizing: border-box;
    display: flex;
    align-items: center;
    border-top: 1px solid #8d929a;
    background: linear-gradient(#e6e8eb, #c3c7cc);
  }

  .item {
    display: flex;
    align-items: center;
    gap: 15px;
    height: 18px;
    padding: 0 9px 0 10px;
    border-right: 1px solid #a3a7ae;
    line-height: 18px;
  }

  .item:first-child {
    padding-left: 5px;
  }

  .item.lang svg {
    flex: none;
  }

  .views {
    display: flex;
    margin-left: auto;
    border-left: 1px solid #a3a7ae;
    padding-left: 4px;
  }

  .views button {
    width: 18px;
    height: 19px;
    box-sizing: border-box;
    display: flex;
    align-items: center;
    justify-content: center;
  }

  .percent {
    width: 32px;
    margin: 0 7px 0 11px;
    font-family: "Open Sans", sans-serif;
  }

  .round {
    width: 16px;
    height: 16px;
    display: flex;
  }

  .zoom {
    width: 100px;
    height: 16px;
    appearance: none;
    background: linear-gradient(transparent 7px, #85898f 7px, #85898f 8px, transparent 8px);
  }

  .zoom::-webkit-slider-thumb {
    appearance: none;
    width: 9px;
    height: 13px;
    background: #f4f4f4;
    border: 1px solid #777;
    border-radius: 0 0 5px 5px;
  }

  /* splash dialog */
  .splash {
    position: absolute;
    left: 50%;
    top: 468px;
    width: 370px;
    height: 109px;
    margin-left: -185px;
    box-sizing: border-box;
    padding: 0 10px 0 21px;
    border: 1px solid #999;
    border-radius: 5px;
    background: #fff;
    overflow: hidden;
  }

  .wave {
    position: absolute;
    left: 0;
    top: 0;
    width: 100%;
    height: 100%;
  }

  .tools, .splash h1, .splash p, .brand {
    position: relative;
  }

  .tools {
    display: flex;
    justify-content: flex-end;
    gap: 6px;
    padding-top: 8px;
    height: 13px;
  }

  .tools button {
    display: flex;
  }

  .splash h1 {
    margin: 0;
    font: 14px/20px "Open Sans", sans-serif;
    color: #666;
  }

  .splash p {
    margin: 10px 0 0;
    font-size: 13px;
    line-height: 20px;
    color: #e4e4e4;
  }

  .brand {
    display: flex;
    justify-content: space-between;
  }

  .logo {
    display: flex;
    align-items: center;
    height: 18px;
    color: #111;
    font: 16px/18px "Open Sans", sans-serif;
  }

  .cancel {
    padding-top: 7px;
    font-size: 13px;
    line-height: 20px;
    color: #111;
  }

  .pointer {
    position: absolute;
    left: 107px;
    top: 86px;
  }

  .clock {
    position: absolute;
    right: 122px;
    bottom: 75px;
    width: 44px;
    height: 44px;
    border: 3px solid #eef4fb;
    border-radius: 50%;
    background: radial-gradient(circle at 60% 105%, #6fc3ff 0, #3f97f8 35%, #3a8cf5 100%);
    color: #fff;
    font: 13px/44px "Open Sans", sans-serif;
    text-align: center;
  }

  .meter {
    position: absolute;
    right: 0;
    top: 718px;
    width: 4px;
    height: 55px;
    border: 1px solid #444;
    border-right: 0;
    border-radius: 4px 0 0 4px;
    background: linear-gradient(#555 14px, #3aa35b 14px);
  }
</style>
